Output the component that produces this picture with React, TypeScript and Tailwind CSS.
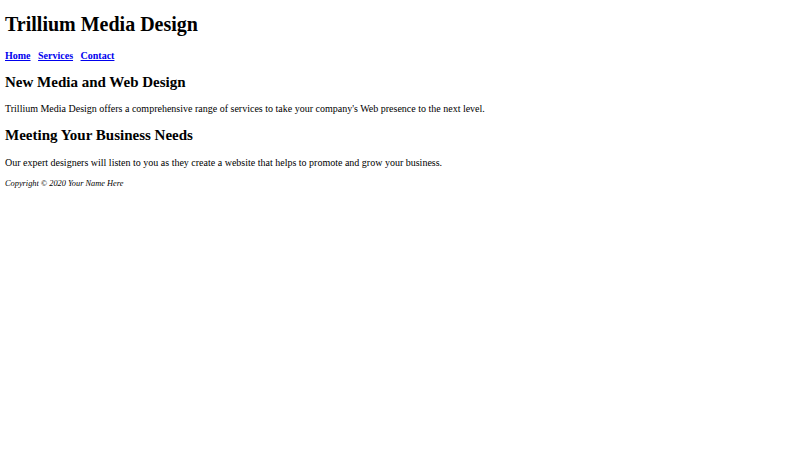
export default function App() {
  return (
    <div className="min-h-[450px] bg-white p-[5px] font-['Liberation_Serif','Times_New_Roman',serif] text-black">
      <h1 className="mt-[8.4px] mb-[13.4px] text-[20px] leading-[23px] font-bold">Trillium Media Design</h1>
      <nav className="text-[10px] leading-[11.5px] font-bold">
        <a href="#" className="mr-[7.5px] text-[#0000ee] underline">Home</a>
        <a href="#" className="mr-[7.5px] text-[#0000ee] underline">Services</a>
        <a href="#" className="text-[#0000ee] underline">Contact</a>
      </nav>
      <main>
        <h2 className="mt-[12.45px] mb-[12.45px] text-[15px] leading-[17.25px] font-bold">New Media and Web Design</h2>
        <p className="text-[10px] leading-[11.5px]">
          Trillium Media Design offers a comprehensive range of services to take your company's Web presence to the next level.
        </p>
        <h2 className="mt-[12.45px] mb-[12.45px] text-[15px] leading-[17.25px] font-bold">Meeting Your Business Needs</h2>
        <p className="text-[10px] leading-[11.5px]">
          Our expert designers will listen to you as they create a website that helps to promote and grow your business.
        </p>
      </main>
      <footer className="mt-[10px] text-[8.33px] leading-[9.6px] italic">
        Copyright &copy; 2020 Your Name Here
      </footer>
    </div>
  );
}
